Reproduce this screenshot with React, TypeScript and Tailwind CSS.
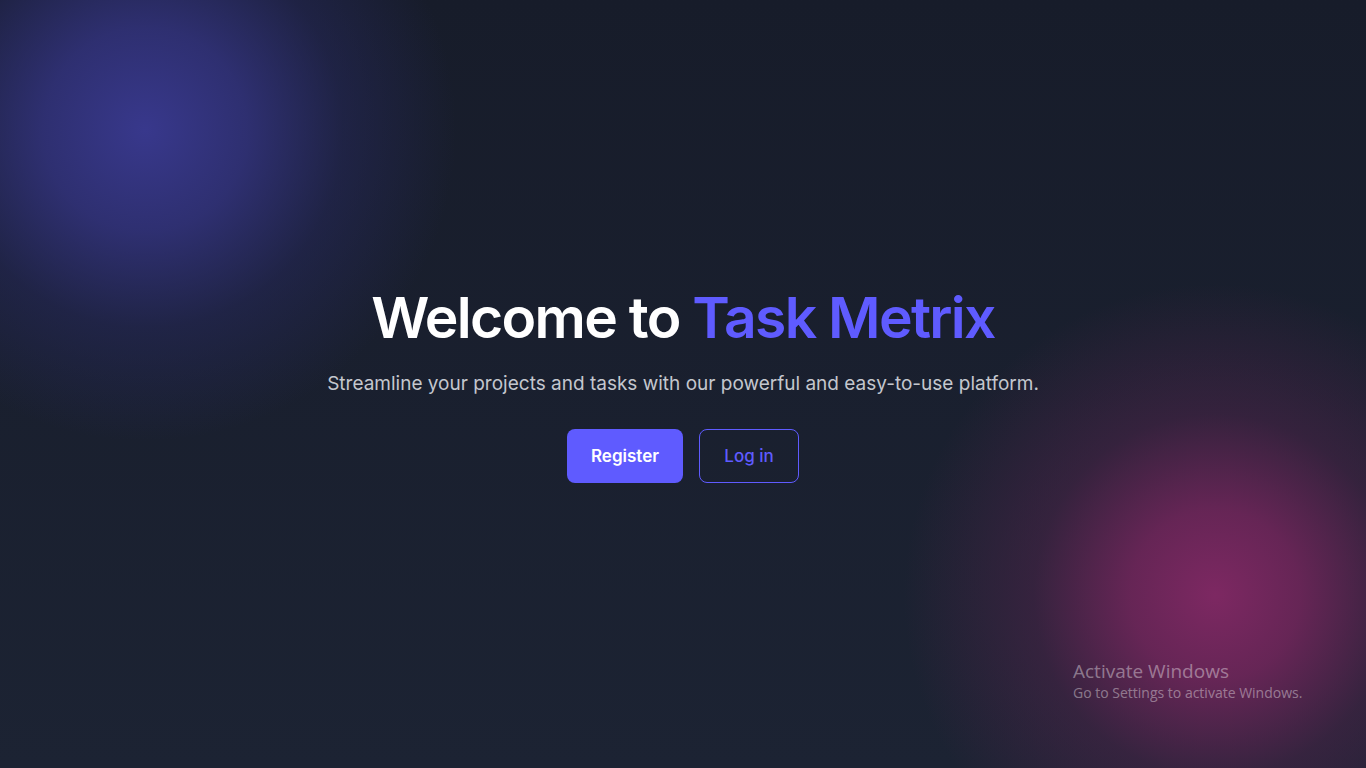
import React from 'react';

export default function App() {
  return (
    <div className="relative min-h-screen overflow-hidden bg-gradient-to-b from-[#171c2a] to-[#1c2333] font-['Inter',sans-serif]">
      {/* glow blobs */}
      <div className="pointer-events-none absolute left-[-255px] top-[-270px] h-[800px] w-[800px] rounded-full bg-[radial-gradient(circle,rgba(56,56,140,1)_0%,rgba(52,52,130,0.8)_18%,rgba(40,42,100,0.45)_35%,rgba(23,28,42,0)_55%)]" />
      <div className="pointer-events-none absolute left-[815px] top-[195px] h-[800px] w-[800px] rounded-full bg-[radial-gradient(circle,rgba(125,40,98,1)_0%,rgba(115,38,92,0.85)_15%,rgba(80,36,75,0.5)_32%,rgba(28,35,51,0)_55%)]" />

      <main className="relative flex min-h-screen flex-col items-center justify-center px-4 pt-1 text-center">
        <h1 className="text-[57px] font-semibold leading-none tracking-[-0.03em] text-white">
          Welcome to <span className="text-[#5f5bff]">Task Metrix</span>
        </h1>
        <p className="mt-6 text-[19px] text-[#c4c7ce]">
          Streamline your projects and tasks with our powerful and easy-to-use platform.
        </p>
        <div className="mt-[31px] flex gap-4">
          <a
            href="#"
            className="flex h-[54px] w-[116px] items-center justify-center rounded-lg bg-[#5f5bff] text-[17px] font-semibold text-white"
          >
            Register
          </a>
          <a
            href="#"
            className="flex h-[54px] w-[100px] items-center justify-center rounded-lg border border-[#5f5bff] text-[17px] font-medium text-[#5f5bff]"
          >
            Log in
          </a>
        </div>
      </main>

      {/* windows watermark */}
      <div className="pointer-events-none absolute left-[1073px] top-[659px] font-['Open_Sans',sans-serif] text-white/40">
        <div className="text-[19px] leading-6">Activate Windows</div>
        <div className="text-[14px] leading-5">Go to Settings to activate Windows.</div>
      </div>
    </div>
  );
}
